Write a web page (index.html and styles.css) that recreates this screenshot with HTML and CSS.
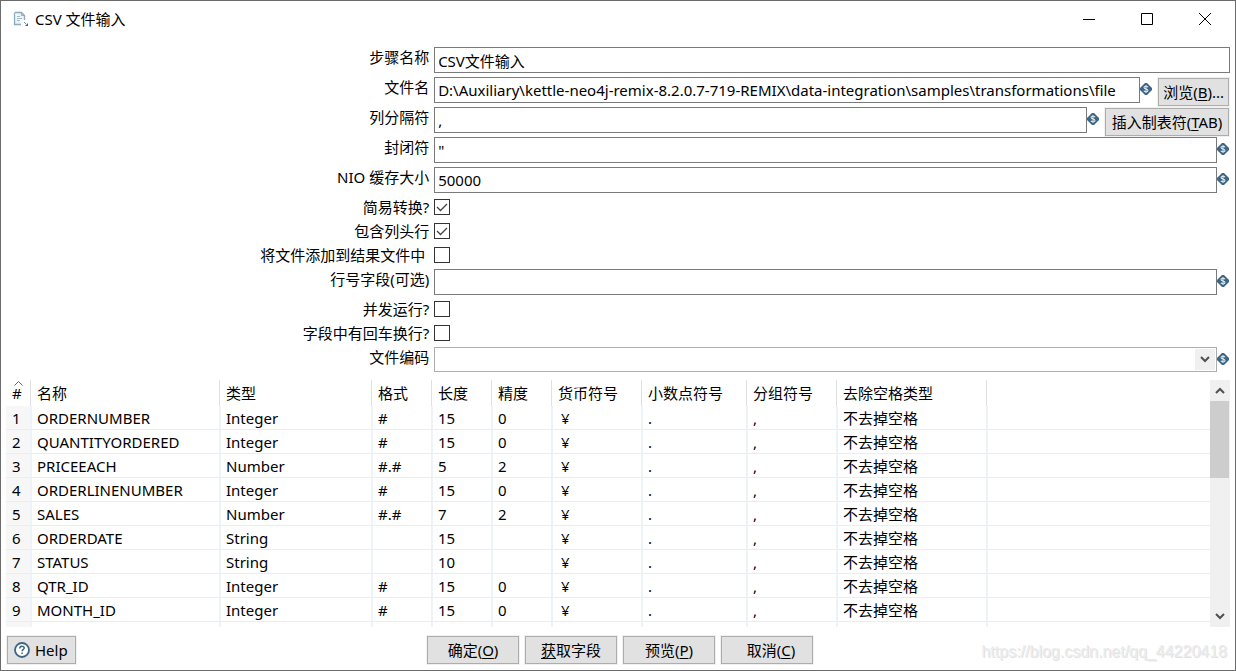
FILE: index.html
```html
<!DOCTYPE html>
<html lang="zh-CN">
<head>
<meta charset="utf-8">
<title>CSV 文件输入</title>
<link rel="stylesheet" href="styles.css">
</head>
<body>
<svg class="defs" aria-hidden="true">
  <symbol id="var" viewBox="0 0 12 12">
    <path d="M5 0h2l5 5v2l-5 5H5L0 7V5z" fill="#3d6685"/>
    <path d="M8 4.200C7.600 3.400 7 3.200 6 3.200c-1.200 0-2 .4-2 1.300C4 6.400 8 5.500 8 7.400c0 1-.8 1.400-2 1.400-1.100 0-1.800-.3-2.100-1.100M6 2v8" fill="none" stroke="#dce6ed" stroke-width="1.100"/>
  </symbol>
  <symbol id="down" viewBox="0 0 10 7"><path d="M1 1l4 4 4-4" fill="none" stroke="#505050" stroke-width="2"/></symbol>
  <symbol id="up" viewBox="0 0 10 7"><path d="M1 6l4-4 4 4" fill="none" stroke="#505050" stroke-width="2"/></symbol>
</svg>
<div class="window">
  <header class="titlebar">
    <svg class="app-icon" viewBox="0 0 16 16" aria-hidden="true">
      <path d="M2 1.500h6.500l3 3V9M8 13.500H1.500v-12" fill="#eaf2f8" stroke="#8eabc0" stroke-width="1.300"/>
      <path d="M8.500 1.500v3h3" fill="none" stroke="#8eabc0"/>
      <path d="M4 5.500h3M4 7.500h5M4 9.500h3" stroke="#9cb8cb"/>
      <path d="M11 11l2 2" stroke="#6d8ea6"/>
      <path d="M15 12v3h-3z" fill="#3d6685"/>
    </svg>
    <h1 class="title">CSV 文件输入</h1>
    <button class="win-btn" aria-label="最小化"><svg viewBox="0 0 12 12"><path d="M0 6.500h12" stroke="#000"/></svg></button>
    <button class="win-btn" aria-label="最大化"><svg viewBox="0 0 12 12"><path d="M.5.5h11v11H.5z" fill="none" stroke="#000"/></svg></button>
    <button class="win-btn" aria-label="关闭"><svg viewBox="0 0 12 12"><path d="M0 0l12 12M12 0L0 12" stroke="#000"/></svg></button>
  </header>

  <form class="form">
    <div class="row"><label for="step">步骤名称</label><input class="text" id="step" value="CSV文件输入"></div>
    <div class="row"><label for="file">文件名</label><input class="text" id="file" value="D:\Auxiliary\kettle-neo4j-remix-8.2.0.7-719-REMIX\data-integration\samples\transformations\file"><svg class="var"><use href="#var"/></svg><button type="button" class="btn side">浏览(<u>B</u>)...</button></div>
    <div class="row"><label for="sep">列分隔符</label><input class="text" id="sep" value=","><svg class="var"><use href="#var"/></svg><button type="button" class="btn side wide">插入制表符(<u>T</u>AB)</button></div>
    <div class="row"><label for="quote">封闭符</label><input class="text" id="quote" value="&quot;"><svg class="var"><use href="#var"/></svg></div>
    <div class="row"><label for="nio">NIO 缓存大小</label><input class="text" id="nio" value="50000"><svg class="var"><use href="#var"/></svg></div>
    <div class="row check"><label for="lazy">简易转换?</label><input type="checkbox" id="lazy" checked></div>
    <div class="row check"><label for="head">包含列头行</label><input type="checkbox" id="head" checked></div>
    <div class="row check"><label for="add">将文件添加到结果文件中&nbsp;</label><input type="checkbox" id="add"></div>
    <div class="row"><label for="rownum">行号字段(可选)</label><input class="text" id="rownum"><svg class="var"><use href="#var"/></svg></div>
    <div class="row check"><label for="par">并发运行?</label><input type="checkbox" id="par"></div>
    <div class="row check"><label for="nl">字段中有回车换行?</label><input type="checkbox" id="nl"></div>
    <div class="row"><label for="enc">文件编码</label>
      <div class="combo"><select id="enc"><option></option></select><span class="combo-arrow"><svg class="arrow"><use href="#down"/></svg></span></div>
      <svg class="var"><use href="#var"/></svg></div>
  </form>

  <div class="grid">
    <div class="viewport">
      <table>
        <colgroup><col class="c-num"><col class="c-name"><col class="c-type"><col class="c-s"><col class="c-s"><col class="c-s"><col class="c-m"><col class="c-dec"><col class="c-m"><col class="c-trim"><col></colgroup>
        <thead><tr><th><svg class="sort" viewBox="0 0 9 5"><path d="M.5 4.500l4-4 4 4" fill="none" stroke="#666"/></svg>#</th><th>名称</th><th>类型</th><th>格式</th><th>长度</th><th>精度</th><th>货币符号</th><th>小数点符号</th><th>分组符号</th><th>去除空格类型</th><th></th></tr></thead>
        <tbody>
          <tr><td>1</td><td>ORDERNUMBER</td><td>Integer</td><td>#</td><td>15</td><td>0</td><td>¥</td><td>.</td><td>,</td><td>不去掉空格</td><td></td></tr>
          <tr><td>2</td><td>QUANTITYORDERED</td><td>Integer</td><td>#</td><td>15</td><td>0</td><td>¥</td><td>.</td><td>,</td><td>不去掉空格</td><td></td></tr>
          <tr><td>3</td><td>PRICEEACH</td><td>Number</td><td>#.#</td><td>5</td><td>2</td><td>¥</td><td>.</td><td>,</td><td>不去掉空格</td><td></td></tr>
          <tr><td>4</td><td>ORDERLINENUMBER</td><td>Integer</td><td>#</td><td>15</td><td>0</td><td>¥</td><td>.</td><td>,</td><td>不去掉空格</td><td></td></tr>
          <tr><td>5</td><td>SALES</td><td>Number</td><td>#.#</td><td>7</td><td>2</td><td>¥</td><td>.</td><td>,</td><td>不去掉空格</td><td></td></tr>
          <tr><td>6</td><td>ORDERDATE</td><td>String</td><td></td><td>15</td><td></td><td>¥</td><td>.</td><td>,</td><td>不去掉空格</td><td></td></tr>
          <tr><td>7</td><td>STATUS</td><td>String</td><td></td><td>10</td><td></td><td>¥</td><td>.</td><td>,</td><td>不去掉空格</td><td></td></tr>
          <tr><td>8</td><td>QTR_ID</td><td>Integer</td><td>#</td><td>15</td><td>0</td><td>¥</td><td>.</td><td>,</td><td>不去掉空格</td><td></td></tr>
          <tr><td>9</td><td>MONTH_ID</td><td>Integer</td><td>#</td><td>15</td><td>0</td><td>¥</td><td>.</td><td>,</td><td>不去掉空格</td><td></td></tr>
          <tr><td></td><td></td><td></td><td></td><td></td><td></td><td></td><td></td><td></td><td></td><td></td></tr>
        </tbody>
      </table>
    </div>
    <div class="scrollbar">
      <button class="sb-btn" aria-label="向上滚动"><svg class="arrow"><use href="#up"/></svg></button>
      <div class="track"><div class="thumb"></div></div>
      <button class="sb-btn" aria-label="向下滚动"><svg class="arrow"><use href="#down"/></svg></button>
    </div>
  </div>

  <footer class="footer">
    <button class="btn help"><svg viewBox="0 0 16 16" aria-hidden="true"><circle cx="8" cy="8" r="7" fill="#fff" stroke="#3d6685" stroke-width="1.800"/><path d="M5.800 6.500c0-1.500 1-2.300 2.200-2.300s2.200.7 2.200 1.900c0 1.500-2.100 1.500-2.100 3.200M8.100 10.400v1.500" fill="none" stroke="#3d6685" stroke-width="1.500"/></svg>Help</button>
    <div class="actions">
      <button class="btn">确定(<u>O</u>)</button>
      <button class="btn"><u>获</u>取字段</button>
      <button class="btn">预览(<u>P</u>)</button>
      <button class="btn">&nbsp;&nbsp;取消(<u>C</u>)</button>
    </div>
    <span class="watermark">https://blog.csdn.net/qq_44220418</span>
  </footer>
</div>
</body>
</html>
```
FILE: styles.css
```css
* { box-sizing: border-box; }
body {
  margin: 0;
  background: #fff;
  color: #000;
  font: 15px/22px "Noto Sans", "Noto Sans CJK SC", sans-serif;
}
input, button, select { font: inherit; color: inherit; }
.defs { display: none; }

.window {
  position: relative;
  display: flex;
  flex-direction: column;
  height: 100vh;
  border: 1px solid #6b6b6b;
  overflow: hidden;
}

.titlebar {
  display: flex;
  align-items: center;
  height: 36px;
  padding: 0 1px 0 12px;
  margin-bottom: 8px;
  flex: none;
}
.app-icon { width: 16px; height: 16px; }
.title { flex: 1; margin: 0 0 0 6px; font-size: 15px; font-weight: 400; }
.win-btn {
  width: 58px;
  height: 36px;
  padding: 0;
  border: 0;
  background: none;
}
.win-btn svg { display: block; width: 12px; height: 12px; margin: 0 auto; }

.form { flex: none; padding-right: 5px; }
.row {
  display: flex;
  align-items: flex-start;
  height: 30px;
  padding: 2px 0;
}
.row label {
  flex: 0 0 35%;
  margin-right: 3px;
  padding-right: 2px;
  line-height: 20px;
  text-align: right;
  white-space: nowrap;
}
.row.check { height: 24px; padding: 0; align-items: center; }
.text {
  flex: 1;
  min-width: 0;
  height: 26px;
  padding: 0 2px 0 3px;
  border: 1px solid #7a7a7a;
  background: #fff;
  outline: 0;
}
.var { flex: none; width: 12px; height: 12px; margin: 6px 1px 0 0; }

input[type="checkbox"] {
  appearance: none;
  width: 16px;
  height: 16px;
  margin: 0;
  border: 1px solid #333;
  background: #fff;
}
input[type="checkbox"]:checked {
  background: url("data:image/svg+xml,%3Csvg xmlns='http://www.w3.org/2000/svg' viewBox='0 0 14 14'%3E%3Cpath d='M2 7l3.500 3.500L12 4' fill='none' stroke='%23444' stroke-width='1.300'/%3E%3C/svg%3E") center / 14px 14px no-repeat;
}

.combo { position: relative; flex: 1; height: 25px; }
.combo select {
  display: block;
  appearance: none;
  width: 100%;
  height: 100%;
  border: 1px solid #adadad;
  border-radius: 0;
  background: #fff;
}
.combo-arrow {
  position: absolute;
  top: 2px;
  right: 2px;
  bottom: 2px;
  display: flex;
  align-items: center;
  justify-content: center;
  width: 20px;
  background: #f0f0f0;
  pointer-events: none;
}
.arrow { display: block; width: 10px; height: 7px; }

.btn {
  height: 28px;
  padding: 0 4px;
  border: 1px solid #adadad;
  background: #e1e1e1;
  box-shadow: 0 0 0 1px #f0f0f0;
  line-height: 24px;
  white-space: nowrap;
}
.btn.side { flex: none; margin: 1px 1px 0 5px; }
.btn.wide { min-width: 124px; }
u { text-underline-offset: 2px; }

.grid {
  display: flex;
  flex: 1;
  min-height: 0;
  margin: 5px 5px 0 5px;
}
.viewport { flex: 1; min-width: 0; overflow: hidden; }
table {
  width: 100%;
  border-collapse: separate;
  border-spacing: 0;
  table-layout: fixed;
}
.c-num { width: 26px; }
.c-name { width: 189px; }
.c-type { width: 152px; }
.c-s { width: 60px; }
.c-m { width: 90px; }
.c-dec { width: 105px; }
.c-trim { width: 150px; }
th, td {
  padding: 0 0 0 5px;
  font-weight: 400;
  text-align: left;
  white-space: nowrap;
}
th {
  position: relative;
  height: 26px;
  background: linear-gradient(#e0e0e0, #e0e0e0) right 1px top / 1px 100% no-repeat;
}
td {
  height: 24px;
  border-right: 2px solid #eef2f9;
  border-bottom: 1px solid #ededed;
}
th:first-child, td:first-child { padding-left: 6px; }
td:first-child { background: #f7f7f7; }
td:nth-child(7) { padding-left: 8px; }
th:last-child { background: none; }
td:last-child { border-right: 0; }
.sort { position: absolute; top: 1px; left: 8px; width: 9px; height: 5px; }

.scrollbar {
  display: flex;
  flex-direction: column;
  width: 20px;
  background: #f0f0f0;
}
.sb-btn {
  display: flex;
  align-items: center;
  justify-content: center;
  height: 21px;
  padding: 0;
  border: 0;
  background: none;
}
.track { flex: 1; }
.thumb { height: 37.500%; margin-right: 1px; background: #cdcdcd; }

.footer {
  display: grid;
  grid-template-columns: 1fr auto 1fr;
  flex: none;
  align-items: center;
  padding: 9px 2px 6px 6px;
}
.help { display: flex; align-items: center; gap: 5px; justify-self: start; padding: 0 6px; min-width: 69px; }
.help svg { width: 16px; height: 16px; }
.actions { display: flex; gap: 6px; }
.actions .btn { width: 92px; }
.watermark {
  justify-self: end;
  padding: 4px 6px 0 0;
  color: #ececec;
  font: 16px/22px "Liberation Sans", sans-serif;
  text-shadow: 1px 1px 0 #e2e2e2;
}
```
